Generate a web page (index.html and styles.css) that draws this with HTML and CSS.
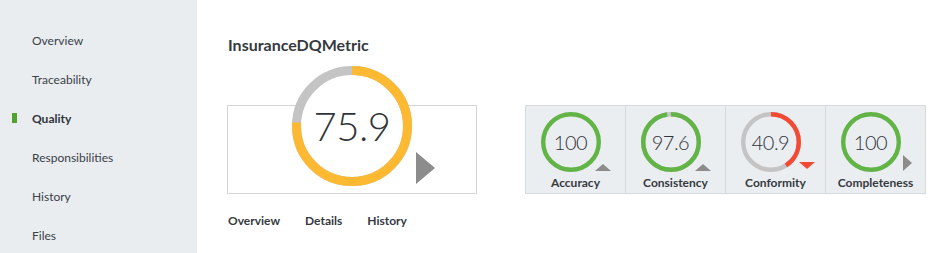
FILE: index.html
```html
<!DOCTYPE html>
<html>
<head>
<meta charset="utf-8">
<link rel="stylesheet" href="styles.css">
</head>
<body>
<div class="page">
  <nav class="sidebar">
    <a class="nav-item">Overview</a>
    <a class="nav-item">Traceability</a>
    <a class="nav-item active">Quality</a>
    <a class="nav-item">Responsibilities</a>
    <a class="nav-item">History</a>
    <a class="nav-item">Files</a>
  </nav>
  <main class="main">
    <h1 class="title">InsuranceDQMetric</h1>
    <div class="row">
      <div class="overall">
        <div class="overall-box"></div>
        <div class="big-gauge">
          <svg width="120" height="120" viewBox="0 0 120 120">
            <circle cx="60" cy="60" r="55.5" fill="#fff" stroke="#c4c4c4" stroke-width="9"/>
            <circle cx="60" cy="60" r="55.5" fill="none" stroke="#fdb932" stroke-width="9" stroke-dasharray="264.68 400" transform="rotate(-90 60 60)"/>
          </svg>
          <span class="big-value">75.9</span>
        </div>
        <svg class="big-arrow" width="19" height="32" viewBox="0 0 19 32"><polygon points="0,0 19,16 0,32" fill="#8c8c8c"/></svg>
      </div>
      <div class="metrics">
        <div class="metric">
          <div class="gauge">
            <svg width="70" height="60" viewBox="0 0 70 60">
              <circle cx="30" cy="30" r="27.8" fill="none" stroke="#62b446" stroke-width="4.4"/>
              <polygon points="54,59 62,52 70,59" fill="#8c8c8c"/>
            </svg>
            <span class="value">100</span>
          </div>
          <div class="label">Accuracy</div>
        </div>
        <div class="metric">
          <div class="gauge">
            <svg width="70" height="60" viewBox="0 0 70 60">
              <circle cx="30" cy="30" r="27.8" fill="none" stroke="#c4c4c4" stroke-width="4.4"/>
              <circle cx="30" cy="30" r="27.8" fill="none" stroke="#62b446" stroke-width="4.4" stroke-dasharray="170.5 200" transform="rotate(-90 30 30)"/>
              <polygon points="54,59 62,52 70,59" fill="#8c8c8c"/>
            </svg>
            <span class="value">97.6</span>
          </div>
          <div class="label">Consistency</div>
        </div>
        <div class="metric">
          <div class="gauge">
            <svg width="70" height="60" viewBox="0 0 70 60">
              <circle cx="30" cy="30" r="27.8" fill="none" stroke="#c4c4c4" stroke-width="4.4"/>
              <circle cx="30" cy="30" r="27.8" fill="none" stroke="#f44a34" stroke-width="4.4" stroke-dasharray="71.4 200" transform="rotate(-90 30 30)"/>
              <polygon points="58,50 74,50 66,57" fill="#f44a34"/>
            </svg>
            <span class="value">40.9</span>
          </div>
          <div class="label">Conformity</div>
        </div>
        <div class="metric">
          <div class="gauge">
            <svg width="70" height="60" viewBox="0 0 70 60">
              <circle cx="30" cy="30" r="27.8" fill="none" stroke="#62b446" stroke-width="4.4"/>
              <polygon points="62,43 71,51 62,59" fill="#8c8c8c"/>
            </svg>
            <span class="value">100</span>
          </div>
          <div class="label">Completeness</div>
        </div>
      </div>
    </div>
    <div class="tabs">
      <a class="tab">Overview</a>
      <a class="tab">Details</a>
      <a class="tab">History</a>
    </div>
  </main>
</div>
</body>
</html>
```
FILE: styles.css
```css
html, body {
  margin: 0;
  padding: 0;
  background: #fff;
  font-family: Lato, "Open Sans", sans-serif;
  color: #353a3f;
}
.page {
  display: flex;
  height: 253px;
  overflow: hidden;
}
.sidebar {
  width: 197px;
  flex: none;
  background: #e9edf0;
  padding-top: 21px;
  box-sizing: border-box;
}
.nav-item {
  display: block;
  position: relative;
  height: 39px;
  line-height: 39px;
  padding-left: 32px;
  font-size: 12px;
  color: #3b4147;
}
.nav-item.active {
  font-weight: 700;
  color: #2f343a;
}
.nav-item.active::before {
  content: "";
  position: absolute;
  left: 12px;
  top: 14px;
  width: 5px;
  height: 10px;
  background: #53a22f;
}
.main {
  padding-left: 31px;
  padding-top: 35px;
}
.title {
  margin: 0;
  font-size: 16px;
  line-height: 20px;
  font-weight: 700;
  color: #353a3f;
}
.row {
  display: flex;
  align-items: flex-start;
  margin-top: 11px;
  margin-left: -1px;
}
.overall {
  display: grid;
  width: 250px;
}
.overall > * {
  grid-area: 1 / 1;
}
.overall-box {
  margin-top: 39px;
  height: 87px;
  border: 1px solid #d3d6d9;
}
.big-gauge {
  justify-self: center;
  display: grid;
  width: 120px;
  height: 120px;
}
.big-gauge > * {
  grid-area: 1 / 1;
}
.big-gauge svg {
  display: block;
}
.big-value {
  align-self: center;
  justify-self: center;
  font-size: 40px;
  font-weight: 300;
  color: #30353a;
  letter-spacing: -0.5px;
}
.big-arrow {
  align-self: end;
  justify-self: start;
  margin-left: 189px;
  margin-bottom: 10px;
  display: block;
}
.metrics {
  display: flex;
  margin-left: 48px;
  margin-top: 39px;
  border: 1px solid #d6d9dd;
  background: #ebeef1;
}
.metric {
  width: 100px;
  height: 87px;
  border-left: 1px solid #d6d9dd;
  display: flex;
  flex-direction: column;
  align-items: center;
  padding-top: 6px;
  box-sizing: border-box;
}
.metric:first-child {
  width: 99px;
  border-left: none;
}
.gauge {
  display: grid;
  width: 70px;
  height: 60px;
}
.gauge > * {
  grid-area: 1 / 1;
}
.gauge svg {
  display: block;
  overflow: visible;
}
.value {
  width: 60px;
  align-self: center;
  text-align: center;
  font-size: 20px;
  font-weight: 300;
  color: #30353a;
  letter-spacing: -0.5px;
}
.label {
  margin-top: 4px;
  font-size: 12px;
  font-weight: 700;
  color: #353a3f;
  line-height: 14px;
}
.tabs {
  display: flex;
  gap: 25px;
  margin-top: 19px;
}
.tab {
  font-size: 12px;
  font-weight: 700;
  color: #353a3f;
}
```
